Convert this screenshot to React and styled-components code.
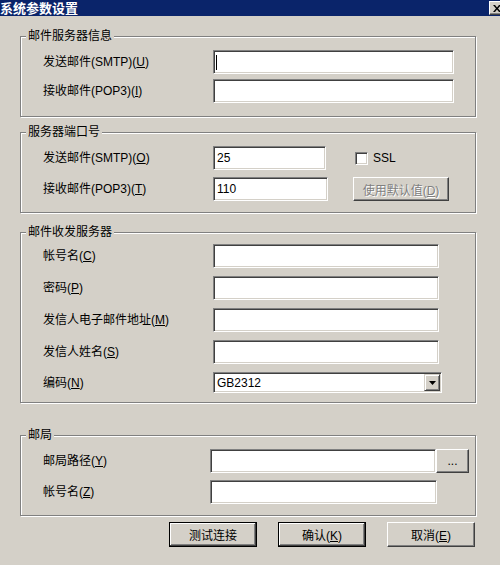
import React from "react"
import styled, { createGlobalStyle, css } from "styled-components"

const FACE = "#d4d0c8"

const GlobalStyle = createGlobalStyle`
  html, body {
    margin: 0;
    padding: 0;
    background: ${FACE};
  }
  body {
    font-family: "Liberation Sans", "Noto Sans CJK SC", sans-serif;
    font-size: 12px;
    color: #000;
  }
`

const Window = styled.div`
  width: 500px;
  height: 565px;
  overflow: hidden;
  display: flex;
  flex-direction: column;
  background: ${FACE};
`

const TitleBar = styled.div`
  height: 16px;
  flex: none;
  background: #0a246a;
  display: flex;
  align-items: center;
  justify-content: space-between;
  overflow: hidden;
`

const Title = styled.span`
  color: #fff;
  font-family: "Noto Sans CJK SC", sans-serif;
  font-weight: bold;
  font-size: 13px;
  line-height: 16px;
`

const CloseButton = styled.div`
  box-sizing: border-box;
  flex: none;
  width: 16px;
  height: 14px;
  margin-right: -5px;
  background: ${FACE};
  border: 1px solid;
  border-color: #fff #404040 #404040 #fff;
  box-shadow: inset -1px -1px 0 #808080;
  display: flex;
  align-items: center;
  justify-content: center;
`

const GroupBox = styled.section`
  position: relative;
  box-sizing: border-box;
  flex: none;
  width: 456px;
  margin: ${p => p.$top}px 0 0 20px;
  border: 1px solid #808080;
  box-shadow: inset 1px 1px 0 #fff, 1px 1px 0 #fff;
  padding: ${p => p.$pad};
  display: grid;
  grid-template-columns: ${p => p.$cols};
  row-gap: ${p => p.$gap}px;
  align-items: center;
`

const Legend = styled.span`
  position: absolute;
  top: -8px;
  left: 5px;
  padding: 0 2px;
  background: ${FACE};
  line-height: 14px;
  white-space: nowrap;
`

const Label = styled.span`
  white-space: nowrap;
  line-height: 14px;
`

const Field = styled.div`
  box-sizing: border-box;
  width: ${p => p.$w}px;
  height: ${p => p.$h || 24}px;
  background: #fff;
  border: 1px solid;
  border-color: #808080 #fff #fff #808080;
  box-shadow: inset 1px 1px 0 #404040, inset -1px -1px 0 ${FACE};
  padding: 0 ${p => (p.$select ? 1 : 3)}px 0 3px;
  display: flex;
  align-items: center;
  justify-content: space-between;
  font-size: 12px;
`

const Caret = styled.span`
  display: block;
  width: 1px;
  height: 15px;
  margin-left: -1px;
  background: #000;
`

const DropButton = styled.div`
  box-sizing: border-box;
  width: 16px;
  height: 17px;
  background: ${FACE};
  border: 1px solid;
  border-color: ${FACE} #404040 #404040 ${FACE};
  box-shadow: inset 1px 1px 0 #fff, inset -1px -1px 0 #808080;
  display: flex;
  align-items: center;
  justify-content: center;
`

const CheckRow = styled.label`
  display: flex;
  align-items: center;
  gap: 5px;
  margin-left: 2px;
`

const CheckBox = styled.span`
  box-sizing: border-box;
  width: 13px;
  height: 13px;
  background: #fff;
  border: 1px solid;
  border-color: #808080 #fff #fff #808080;
  box-shadow: inset 1px 1px 0 #404040, inset -1px -1px 0 ${FACE};
`

const PathRow = styled.div`
  display: flex;
  align-items: center;
  height: 24px;
`

const Button = styled.button`
  box-sizing: border-box;
  flex: none;
  width: ${p => p.$w}px;
  height: ${p => p.$h || 25}px;
  padding: 0;
  background: ${FACE};
  border: 1px solid;
  border-color: #fff #404040 #404040 #fff;
  box-shadow: inset -1px -1px 0 #808080;
  font-family: "Liberation Sans", "Noto Sans CJK SC", sans-serif;
  font-size: 12px;
  color: #000;
  ${p => p.$default && css`
    border-color: #000;
    box-shadow: inset -1px -1px 0 #404040, inset 1px 1px 0 #fff, inset -2px -2px 0 #808080;
  `}
  &:disabled {
    color: #808080;
    text-shadow: 1px 1px 0 #fff;
  }
`

const ButtonRow = styled.div`
  display: flex;
  flex: none;
  justify-content: flex-end;
  gap: 21px;
  margin-top: 6px;
  padding-right: 25px;
`

const Key = ({ k }) => <>(<u>{k}</u>)</>

export default function App() {
  return (
    <>
      <GlobalStyle />
      <Window>
        <TitleBar>
          <Title>系统参数设置</Title>
          <CloseButton>
            <svg width="8" height="7" viewBox="0 0 8 7">
              <path d="M0 0h2l2 2.5L6 0h2L5 3.5 8 7H6L4 4.5 2 7H0l3-3.5z" fill="#000" />
            </svg>
          </CloseButton>
        </TitleBar>

        <GroupBox $top={20} $pad="13px 0 13px 22px" $cols="170px 241px" $gap={5}>
          <Legend>邮件服务器信息</Legend>
          <Label>发送邮件(SMTP)<Key k="U" /></Label>
          <Field $w={241}><Caret /></Field>
          <Label>接收邮件(POP3)<Key k="I" /></Label>
          <Field $w={241} />
        </GroupBox>

        <GroupBox $top={15} $pad="13px 0 11px 22px" $cols="170px 140px auto" $gap={7}>
          <Legend>服务器端口号</Legend>
          <Label>发送邮件(SMTP)<Key k="O" /></Label>
          <Field $w={113}>25</Field>
          <CheckRow>
            <CheckBox />
            SSL
          </CheckRow>
          <Label>接收邮件(POP3)<Key k="T" /></Label>
          <Field $w={115}>110</Field>
          <Button $w={96} $h={24} disabled>使用默认值<Key k="D" /></Button>
        </GroupBox>

        <GroupBox $top={19} $pad="11px 0 9px 22px" $cols="170px 229px" $gap={8}>
          <Legend>邮件收发服务器</Legend>
          <Label>帐号名<Key k="C" /></Label>
          <Field $w={226} />
          <Label>密码<Key k="P" /></Label>
          <Field $w={226} />
          <Label>发信人电子邮件地址<Key k="M" /></Label>
          <Field $w={226} />
          <Label>发信人姓名<Key k="S" /></Label>
          <Field $w={226} />
          <Label>编码<Key k="N" /></Label>
          <Field $w={229} $h={21} $select>
            GB2312
            <DropButton>
              <svg width="7" height="4" viewBox="0 0 7 4">
                <path d="M0 0h7L3.5 4z" fill="#000" />
              </svg>
            </DropButton>
          </Field>
        </GroupBox>

        <GroupBox $top={32} $pad="13px 0 11px 22px" $cols="167px auto" $gap={7}>
          <Legend>邮局</Legend>
          <Label>邮局路径<Key k="Y" /></Label>
          <PathRow>
            <Field $w={226} />
            <Button $w={33} $h={24}>...</Button>
          </PathRow>
          <Label>帐号名<Key k="Z" /></Label>
          <Field $w={227} />
        </GroupBox>

        <ButtonRow>
          <Button $w={88} $default>测试连接</Button>
          <Button $w={88} $default>确认<Key k="K" /></Button>
          <Button $w={88}>取消<Key k="E" /></Button>
        </ButtonRow>
      </Window>
    </>
  )
}
